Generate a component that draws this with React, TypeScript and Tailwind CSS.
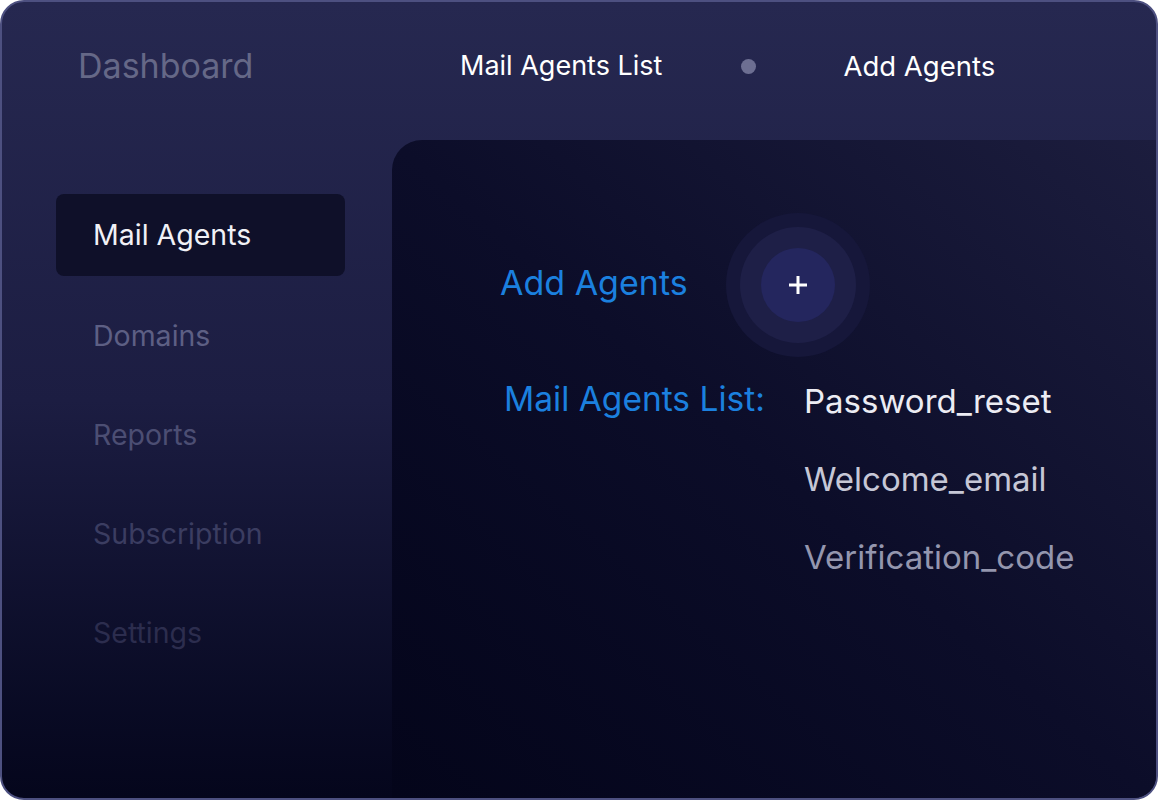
import React from 'react';

const navItems = [
  { label: 'Mail Agents', active: true, color: 'text-[#f1f1f6]' },
  { label: 'Domains', color: 'text-[#5d5f84]' },
  { label: 'Reports', color: 'text-[#4c4e73]' },
  { label: 'Subscription', color: 'text-[#3b3d61]' },
  { label: 'Settings', color: 'text-[#2c2d4e]' },
];

const agents = [
  { name: 'Password_reset', color: 'text-[#ececf3]' },
  { name: 'Welcome_email', color: 'text-[#c6c7d6]' },
  { name: 'Verification_code', color: 'text-[#9496ae]' },
];

const App = () => {
  return (
    <div className="w-[1158px] h-[800px] bg-white font-['Inter',sans-serif]">
      <div className="w-full h-full rounded-[24px] border-2 border-[#4d5080] bg-gradient-to-b from-[#262850] via-[#1c1d42] to-[#05061c] overflow-hidden flex flex-col">
        {/* top bar */}
        <div className="h-[138px] flex items-start pt-[44px] shrink-0">
          <div className="w-[458px] pl-[76px] text-[34px] text-[#656887] leading-[40px]">
            Dashboard
          </div>
          <div className="flex items-center text-[27px] text-white leading-[40px]">
            <span>Mail Agents List</span>
            <span className="w-[15px] h-[15px] rounded-full bg-[#6d6f92] ml-[79px] mr-[87px]" />
            <span className="text-[27.5px]">Add Agents</span>
          </div>
        </div>

        <div className="flex flex-1">
          {/* sidebar */}
          <div className="w-[390px] shrink-0 pl-[54px] pt-[54px]">
            <ul className="w-[289px] flex flex-col gap-[17px]">
              {navItems.map((item) => (
                <li
                  key={item.label}
                  className={`h-[82px] flex items-center pl-[37px] rounded-[8px] text-[28.5px] ${item.color} ${
                    item.active ? 'bg-[#0f1029]' : ''
                  }`}
                >
                  <span className={item.active ? '' : 'pt-[4px]'}>{item.label}</span>
                </li>
              ))}
            </ul>
          </div>

          {/* content panel */}
          <div className="flex-1 rounded-tl-[30px] bg-gradient-to-bl from-[#1c1d3e] via-[#0c0d29] to-[#04051a] pl-[108px] pt-[73px]">
            <div className="flex items-center">
              <span className="w-[226px] text-[34px] text-[#1b80df] leading-[40px] -mt-[4px]">
                Add Agents
              </span>
              <div className="w-[144px] h-[144px] rounded-full bg-[#16173a] flex items-center justify-center">
                <div className="w-[116px] h-[116px] rounded-full bg-[#1e1f47] flex items-center justify-center">
                  <div className="w-[74px] h-[74px] rounded-full bg-[#24265e] flex items-center justify-center">
                    <svg width="22" height="22" viewBox="0 0 22 22">
                      <path d="M11 2v18M2 11h18" stroke="white" strokeWidth="3" />
                    </svg>
                  </div>
                </div>
              </div>
            </div>

            <div className="flex mt-[22px]">
              <span className="w-[304px] pl-[4px] text-[33.5px] text-[#1b80df] leading-[40px]">
                Mail Agents List:
              </span>
              <ul className="flex flex-col gap-[38px] pt-[2px]">
                {agents.map((a) => (
                  <li key={a.name} className={`text-[33px] leading-[40px] ${a.color}`}>
                    {a.name}
                  </li>
                ))}
              </ul>
            </div>
          </div>
        </div>
      </div>
    </div>
  );
};

export default App;
